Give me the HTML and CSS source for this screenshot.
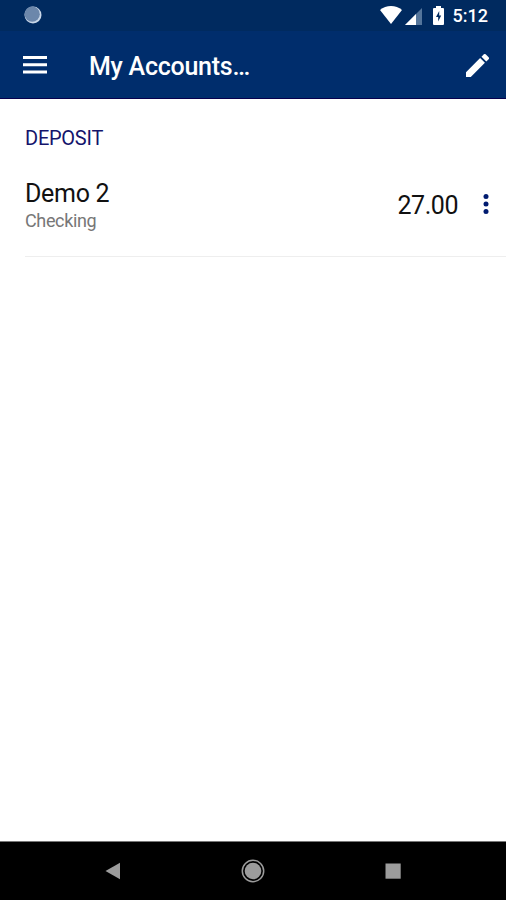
FILE: index.html
```html
<!DOCTYPE html>
<html lang="en">
<head>
    <meta charset="UTF-8">
    <meta name="viewport" content="width=device-width, initial-scale=1.0">
    <title>My Accounts</title>
    <link rel="stylesheet" href="styles.css">
</head>
<body>
    <div class="screen">
        <!-- Status bar -->
        <div class="status-bar">
            <svg class="notification" width="18" height="18" viewBox="0 0 18 18">
                <circle cx="9" cy="9" r="8.5" fill="#c9d7e8"/>
                <circle cx="8.2" cy="8.2" r="7.6" fill="#6c87ab"/>
            </svg>
            <div class="status-icons">
                <svg class="wifi" width="22" height="18" viewBox="0 0 22 18">
                    <path d="M0 4C6-1.3 16-1.3 22 4L11 18z" fill="#fff"/>
                </svg>
                <svg class="signal" width="17" height="17" viewBox="0 0 17 17">
                    <path d="M17 0v17H0z" fill="#54759b"/>
                    <path d="M11 6v11H0z" fill="#fff"/>
                </svg>
                <svg class="battery" width="11" height="19" viewBox="0 0 11 19">
                    <path d="M3 0h5v2h2q1 0 1 1v15q0 1-1 1H1q-1 0-1-1V3q0-1 1-1h2z" fill="#fff"/>
                    <path d="M6.2 5L3 11h2.2v4.5L8.2 9.5H6.2z" fill="#002a5f"/>
                </svg>
                <span class="clock">5:12</span>
            </div>
        </div>

        <!-- App bar -->
        <header class="app-bar">
            <svg class="menu" width="24" height="18" viewBox="0 0 24 18">
                <path d="M0 0h24v3H0zM0 7.3h24v3H0zM0 14.6h24v3H0z" fill="#fff"/>
            </svg>
            <h1>My Accounts…</h1>
            <svg class="edit" width="23" height="23" viewBox="3 3 18 18">
                <path d="M3 17.25V21h3.75L17.81 9.94l-3.75-3.75L3 17.25zM20.71 7.04a1 1 0 0 0 0-1.41l-2.34-2.34a1 1 0 0 0-1.41 0l-1.83 1.83 3.75 3.75 1.83-1.83z" fill="#fff"/>
            </svg>
        </header>

        <!-- Account list -->
        <main>
            <h2>DEPOSIT</h2>
            <div class="account">
                <div class="account-info">
                    <p class="account-name">Demo 2</p>
                    <p class="account-type">Checking</p>
                </div>
                <span class="balance">27.00</span>
                <svg class="more" width="6" height="20" viewBox="0 0 6 20">
                    <g fill="#001b70">
                        <circle cx="3" cy="2.6" r="2.5"/>
                        <circle cx="3" cy="10" r="2.5"/>
                        <circle cx="3" cy="17.4" r="2.5"/>
                    </g>
                </svg>
            </div>
        </main>

        <!-- Navigation bar -->
        <nav class="nav-bar">
            <svg width="24" height="24" viewBox="0 0 24 24">
                <path d="M4.5 12L19 3.7v16.6z" fill="#9c9c9c"/>
            </svg>
            <svg width="24" height="24" viewBox="0 0 24 24">
                <circle cx="12" cy="12" r="10.7" fill="none" stroke="#9c9c9c" stroke-width="1.5"/>
                <circle cx="12" cy="12" r="8.3" fill="#9c9c9c"/>
            </svg>
            <svg width="24" height="24" viewBox="0 0 24 24">
                <path d="M4.5 4.5h15.2v15.2H4.5z" fill="#9c9c9c"/>
            </svg>
        </nav>
    </div>
</body>
</html>
```
FILE: styles.css
```css
* {
    margin: 0;
    padding: 0;
    box-sizing: border-box;
}

body {
    font-family: Roboto, sans-serif;
    background-color: #fff;
    color: #111;
}

svg {
    display: block;
    flex-shrink: 0;
}

.screen {
    display: flex;
    flex-direction: column;
    height: 100vh;
}

.status-bar {
    display: flex;
    justify-content: space-between;
    height: 31px;
    padding: 6px 18px 0 24px;
    background-color: #002a5f;
}

.status-icons {
    display: flex;
}

.wifi {
    margin-right: 3px;
}

.signal {
    margin-top: 2px;
    margin-right: 11px;
}

.battery {
    margin-right: 9px;
}

.clock {
    color: #fff;
    font-size: 18px;
    font-weight: 500;
    line-height: 20px;
}

.app-bar {
    display: flex;
    align-items: center;
    height: 68px;
    padding: 1px 17px 0 23px;
    background-color: #002d6c;
    border-bottom: 1px solid #08004d;
}

.app-bar h1 {
    flex: 1;
    margin-left: 42px;
    padding-top: 3px;
    color: #fff;
    font-size: 25px;
    font-weight: 500;
    line-height: 30px;
    letter-spacing: -0.25px;
}

main {
    flex: 1;
    padding-left: 25px;
}

h2 {
    margin-top: 27px;
    color: #14146b;
    font-size: 20px;
    font-weight: 400;
    line-height: 24px;
    letter-spacing: -0.25px;
}

.account {
    display: flex;
    align-items: center;
    height: 107px;
    padding-top: 1px;
    padding-right: 17px;
    border-bottom: 1px solid #eee;
}

.account-info {
    flex: 1;
    padding-top: 4px;
}

.account-name {
    font-size: 25px;
    line-height: 30px;
    letter-spacing: -0.3px;
}

.account-type {
    color: #777;
    font-size: 18px;
    line-height: 24px;
    letter-spacing: -0.35px;
}

.balance {
    margin-right: 25px;
    padding-top: 4px;
    font-size: 25px;
    line-height: 30px;
    letter-spacing: -0.45px;
}

.nav-bar {
    display: flex;
    justify-content: center;
    align-items: center;
    gap: 116px;
    height: 59px;
    background-color: #000;
    border-top: 1px solid #777;
}
```
